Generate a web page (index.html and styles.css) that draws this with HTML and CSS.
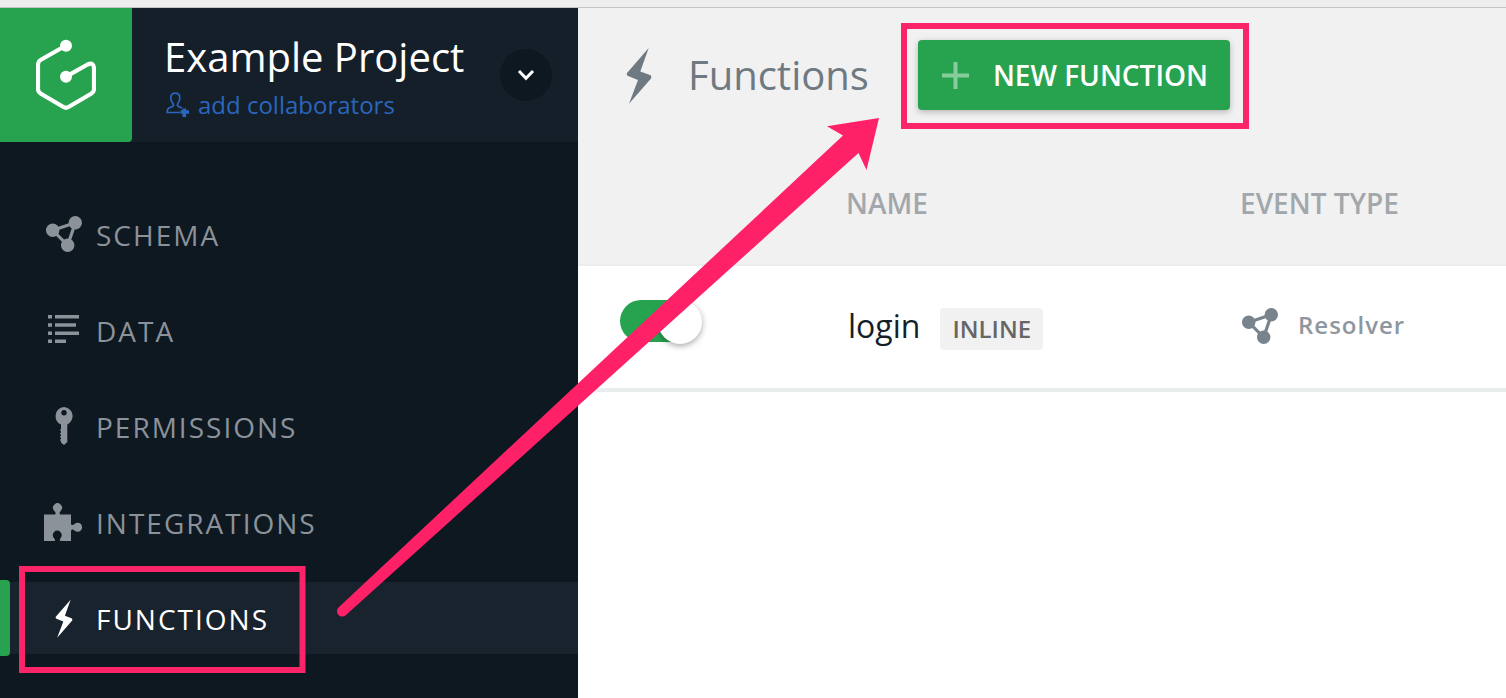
FILE: index.html
```html
<!DOCTYPE html>
<html lang="en">
<head>
<meta charset="utf-8">
<title>Functions</title>
<meta name="viewport" content="width=device-width, initial-scale=1">
<link rel="stylesheet" href="styles.css">
</head>
<body>
<svg class="sprite" aria-hidden="true">
  <symbol id="bolt" viewBox="0 0 26 57">
    <path d="M22.7 1 1 26Q0 28 2 29L12 33 3 56.7 25 31.5Q26 29 24 28L14.3 24.5Z"/>
  </symbol>
  <symbol id="graph" viewBox="0 0 36 36">
    <path d="M6.7 14.3 29.3 6.7 21.7 29.3Z" fill="none" stroke="currentColor" stroke-width="3.2"/>
    <circle cx="6.7" cy="14.3" r="6.7"/><circle cx="29.3" cy="6.7" r="6.7"/><circle cx="21.7" cy="29.3" r="6.7"/>
  </symbol>
</svg>

<div class="window-edge"></div>
<div class="app">
  <aside class="sidebar">
    <header class="project">
      <a class="logo" href="#" aria-label="Home">
        <svg width="60" height="72" viewBox="36 39 60 72">
          <path d="M66 45.5 40.5 60Q38 61.5 38 64.5V89Q38 92 40.5 93.5L63.5 107Q66 108.5 68.5 107L91.5 93.5Q94 92 94 89V69Q94 61.500 87.500 64.500L66 76.700" fill="none" stroke="#fff" stroke-width="4.200"/>
          <circle cx="66" cy="45.700" r="6" fill="#fff"/><circle cx="66" cy="76.700" r="6" fill="#fff"/>
        </svg>
      </a>
      <div class="project-info">
        <div class="project-name">Example Project</div>
        <a class="collaborators" href="#">
          <svg width="24" height="26" viewBox="0 0 24 26">
            <g fill="none" stroke="currentColor">
              <path d="M14 20.500H1.200Q1 16.500 4 15.500L6.500 14.500Q8.200 13.500 7 11.500 4.800 9.500 4.800 6 4.800 1.200 9.300 1.200T13.800 6Q13.800 9.500 11.800 11.500 10.800 13.500 12.500 14.500L16 16" stroke-width="1.700"/>
              <path d="M18.300 16.500V25M14.500 20H23" stroke-width="3.600"/>
            </g>
          </svg>
          <span>add collaborators</span>
        </a>
      </div>
      <button class="project-switch" type="button" aria-label="Switch project">
        <svg width="18" height="12" viewBox="0 0 18 12"><path d="M2 2 9 9.300 16 2" fill="none" stroke="#fff" stroke-width="3"/></svg>
      </button>
    </header>
    <nav class="nav">
      <a class="nav-item" href="#"><span class="nav-icon"><svg width="36" height="36"><use href="#graph"/></svg></span><span class="nav-label">SCHEMA</span></a>
      <a class="nav-item" href="#"><span class="nav-icon"><svg width="32" height="30" viewBox="0 0 32 30"><path d="M0 0h4v3.500H0zM7 0h24v3.500H7zM0 8.200h4v3.500H0zM7 8.200h21v3.500H7zM0 16.400h4v3.500H0zM7 16.400h24v3.500H7zM0 24.600h4v3.500H0zM7 24.600h11v3.500H7z"/></svg></span><span class="nav-label">DATA</span></a>
      <a class="nav-item" href="#"><span class="nav-icon"><svg width="18" height="38" viewBox="0 0 18 38"><path fill-rule="evenodd" d="M9 0a9.200 9.200 0 0 1 3.300 17.500V35L9 38 6 35.500V34l-1.300-1 1.300-1v-1.200l-1.300-1 1.300-1V27.500l-1.300-1 1.300-1V24.300l-1.300-1 1.300-1V17.500A9.200 9.200 0 0 1 9 0ZM9 3a2.700 2.700 0 1 0 0 5.400A2.700 2.700 0 0 0 9 3Z"/></svg></span><span class="nav-label">PERMISSIONS</span></a>
      <a class="nav-item" href="#"><span class="nav-icon"><svg width="40" height="38" viewBox="0 0 40 38"><path d="M0 11.500H10.500Q12 11.500 11.500 9.500L10 7.500A4.500 4.500 0 1 1 17 7.500L15.700 9.500Q15.300 11.500 17 11.500H27V20.500Q27 22.500 29 22L30.500 21A4.500 4.500 0 1 1 30.500 27.500L29 26.500Q27 26 27 28V38H16.200Q15.500 36.500 16.500 35.200A4.500 4.500 0 1 0 10 35.200Q11.500 36.500 10.800 38H0Z"/></svg></span><span class="nav-label">INTEGRATIONS</span></a>
      <a class="nav-item active" href="#" aria-current="page"><span class="nav-icon"><svg width="18" height="39"><use href="#bolt"/></svg></span><span class="nav-label">FUNCTIONS</span></a>
    </nav>
  </aside>

  <main class="content">
    <header class="page-header">
      <svg class="page-icon" width="26" height="57"><use href="#bolt"/></svg>
      <h1 class="page-title">Functions</h1>
      <button class="new-function" type="button">
        <svg width="27" height="27" viewBox="0 0 27 27"><path d="M13.500 0V27M0 13.500H27" stroke="#87cc9b" stroke-width="4"/></svg>
        NEW FUNCTION
      </button>
    </header>
    <table class="functions">
      <colgroup><col class="col-toggle"><col class="col-name"><col></colgroup>
      <thead>
        <tr><th></th><th scope="col">NAME</th><th scope="col">EVENT TYPE</th></tr>
      </thead>
      <tbody>
        <tr>
          <td class="toggle-cell"><input class="toggle" type="checkbox" checked aria-label="Enable login"></td>
          <td><div class="function-name">login <span class="badge">INLINE</span></div></td>
          <td><div class="event"><svg width="36" height="36"><use href="#graph"/></svg><span>Resolver</span></div></td>
        </tr>
      </tbody>
    </table>
  </main>
</div>

<svg class="annotations" aria-hidden="true" width="1506" height="698" viewBox="0 0 1506 698">
  <rect x="22" y="569" width="280.500" height="101"/>
  <rect x="904" y="26" width="342" height="100"/>
  <path d="M879 118 827 126.300 843 135.500 338.500 607.500A5 5 0 0 0 346 615L858.500 153 866.500 170Z"/>
</svg>
</body>
</html>
```

FILE: styles.css
```css
* {
  box-sizing: border-box;
}

body {
  margin: 0;
  min-height: 100vh;
  display: flex;
  flex-direction: column;
  background: #fff;
  font-family: "Open Sans", "Noto Sans", sans-serif;
}

a {
  color: inherit;
  text-decoration: none;
}

button {
  border: 0;
  font: inherit;
  cursor: pointer;
}

svg {
  display: block;
  flex: none;
  fill: currentColor;
}

.sprite {
  position: absolute;
  width: 0;
  height: 0;
}

.window-edge {
  height: 8px;
  background: #eee;
  border-bottom: 1px solid #c4c4c4;
}

.app {
  flex: 1;
  display: flex;
}

/* Sidebar */
.sidebar {
  flex: none;
  width: 578px;
  background: #0e1821;
}

.project {
  display: flex;
  align-items: center;
  padding-right: 26px;
  background: #141f2a;
}

.logo {
  display: flex;
  align-items: center;
  justify-content: center;
  width: 132px;
  height: 134px;
  background: #27a350;
  border-radius: 0 0 4px 0;
}

.project-info {
  flex: 1;
  padding: 4px 0 0 32px;
}

.project-name {
  color: #fff;
  font-size: 40px;
  line-height: 48px;
}

.collaborators {
  display: flex;
  align-items: center;
  gap: 8px;
  margin-top: 8px;
  padding-left: 2px;
  color: #2a66bd;
  font-size: 24px;
  line-height: 32px;
}

.project-switch {
  display: flex;
  align-items: center;
  justify-content: center;
  width: 52px;
  height: 52px;
  padding: 0;
  border-radius: 50%;
  background: #0e1821;
}

.nav {
  display: flex;
  flex-direction: column;
  gap: 24px;
  padding: 56px 0 44px;
}

.nav-item {
  position: relative;
  display: flex;
  align-items: center;
  gap: 12px;
  height: 72px;
  padding-left: 44px;
  color: #8b9299;
  font-size: 28px;
  font-weight: 500;
  letter-spacing: 2px;
}

.nav-label {
  padding-top: 2px;
}

.nav-icon {
  display: flex;
  justify-content: center;
  width: 40px;
}

.nav-item.active {
  color: #fff;
  background: #18232d;
}

.nav-item.active::before {
  content: "";
  position: absolute;
  top: -2px;
  bottom: -2px;
  left: 0;
  width: 10px;
  border-radius: 0 4px 4px 0;
  background: #27a350;
}

/* Content */
.content {
  flex: 1;
  min-width: 0;
}

.page-header {
  display: flex;
  align-items: center;
  padding: 32px 48px 56px;
  background: #f1f1f1;
  color: #6f7982;
}

.page-title {
  margin: 0 49px 0 36px;
  font-size: 40px;
  font-weight: 400;
  line-height: 54px;
}

.new-function {
  display: flex;
  align-items: center;
  gap: 24px;
  height: 70px;
  padding: 0 22px 0 24px;
  border-radius: 4px;
  background: #27a350;
  box-shadow: 0 2px 6px rgba(0, 0, 0, 0.25);
  color: #fff;
  font-size: 28px;
  font-weight: 600;
  white-space: nowrap;
}

.functions {
  width: 100%;
  border-collapse: separate;
  border-spacing: 0;
  table-layout: fixed;
}

.col-toggle {
  width: 268px;
}

.col-name {
  width: 394px;
}

.functions th {
  padding: 18px 0 42px;
  border-bottom: 2px solid #eceeee;
  background: #f1f1f1;
  color: #a2a7ac;
  font-size: 28px;
  font-weight: 600;
  line-height: 38px;
  text-align: left;
}

.functions td {
  padding: 38px 0 38px 2px;
  border-bottom: 4px solid #e9edee;
  vertical-align: top;
}

.functions .toggle-cell {
  padding: 34px 0 0 42px;
}

.toggle {
  appearance: none;
  display: block;
  width: 80px;
  height: 42px;
  margin: 0;
  border-radius: 21px;
  background: #ccc;
}

.toggle::before {
  content: "";
  display: block;
  width: 44px;
  height: 44px;
  border-radius: 50%;
  background: #fff;
  box-shadow: 0 2px 6px rgba(0, 0, 0, 0.35);
}

.toggle:checked {
  background: #27a350;
}

.toggle:checked::before {
  margin-left: 38px;
}

.function-name {
  display: flex;
  align-items: baseline;
  gap: 20px;
  color: #141f2a;
  font-size: 32px;
  line-height: 44px;
}

.badge {
  padding: 0 12px;
  border-radius: 4px;
  background: #f1f1f1;
  color: #666;
  font-size: 24px;
  font-weight: 600;
  line-height: 42px;
}

.event {
  display: flex;
  align-items: center;
  gap: 20px;
  height: 44px;
  color: #78838c;
}

.event span {
  padding-bottom: 4px;
  color: #8f979e;
  font-size: 24px;
  font-weight: 600;
  letter-spacing: 1px;
}

/* Callouts drawn over the page */
.annotations {
  position: absolute;
  top: 0;
  left: 0;
  pointer-events: none;
  fill: #ff2168;
}

.annotations rect {
  fill: none;
  stroke: #fa2469;
  stroke-width: 6;
}
```
